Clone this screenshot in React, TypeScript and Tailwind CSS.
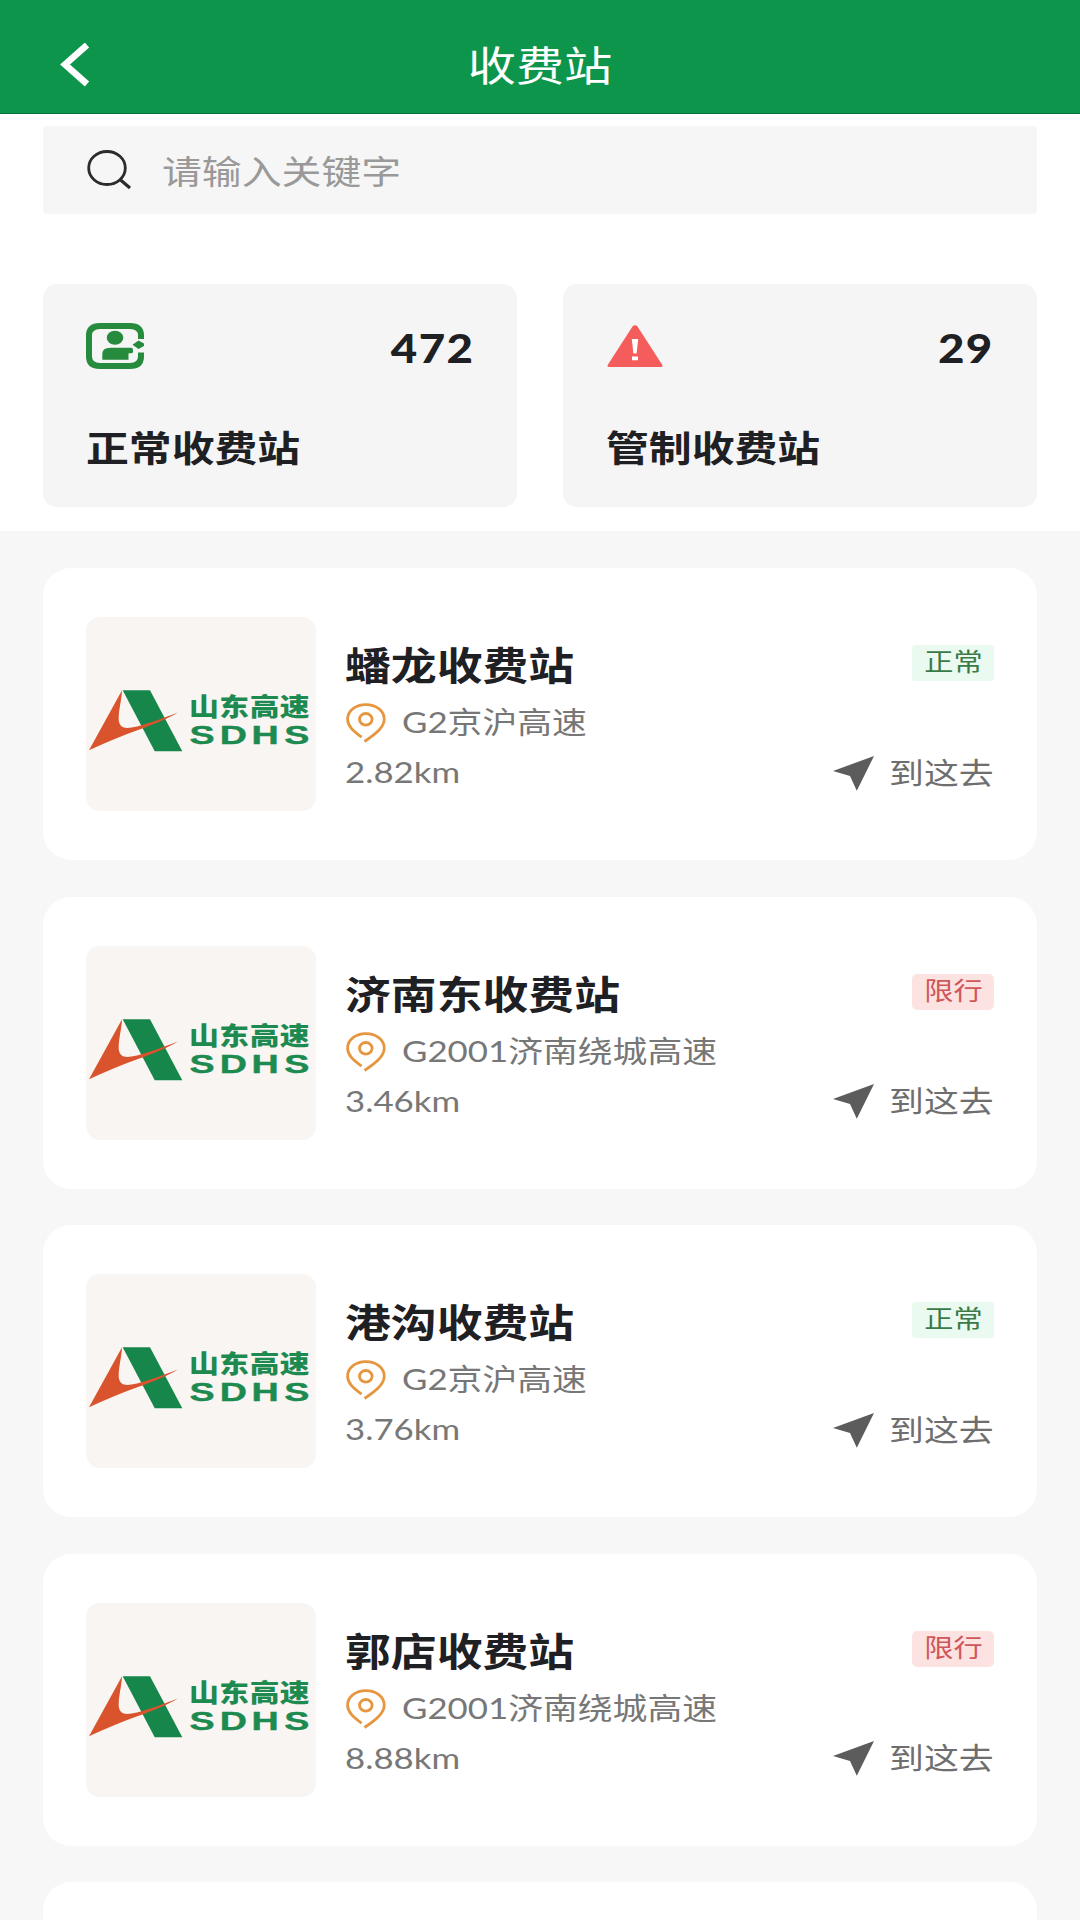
type Station = { name: string; road: string; distance: string; limited: boolean };

const stations: Station[] = [
  { name: '蟠龙收费站', road: 'G2京沪高速', distance: '2.82km', limited: false },
  { name: '济南东收费站', road: 'G2001济南绕城高速', distance: '3.46km', limited: true },
  { name: '港沟收费站', road: 'G2京沪高速', distance: '3.76km', limited: false },
  { name: '郭店收费站', road: 'G2001济南绕城高速', distance: '8.88km', limited: true },
];

function BackIcon() {
  return (
    <svg width="30" height="44" viewBox="0 0 30 44" fill="none" stroke="#fff" strokeWidth="6.5">
      <path d="M27 2 5 21.500l22 19.500" />
    </svg>
  );
}

function SearchIcon() {
  return (
    <svg width="46" height="40" viewBox="0 0 46 40" fill="none" stroke="#2b2b2b" strokeWidth="2.8">
      <ellipse cx="21" cy="18" rx="18.3" ry="16.5" />
      <path d="M34 29.500l10 8.500" strokeWidth="3.2" />
    </svg>
  );
}

function BoothIcon() {
  return (
    <svg width="58" height="46" viewBox="0 0 58 46" fill="#278b3d">
      <path
        d="M55 16v-3.500q0-9.500-11-9.500H14Q3 3 3 12.500v21Q3 43 14 43h30q11 0 11-9.500V29.500"
        fill="none"
        stroke="#278b3d"
        strokeWidth="6"
      />
      <ellipse cx="29" cy="14.800" rx="8.300" ry="7" />
      <path d="M16.300 36.700V31q0-6.300 8-6.300H45q2 0 2 2v2q0 1.500-2 1.500h-2.500v6.500z" />
      <path d="M46.500 21.700l6-4.200 5.500 3v2.500l-5.500 3z" />
    </svg>
  );
}

function WarningIcon() {
  return (
    <svg width="56" height="42" viewBox="0 0 56 42" className="ml-px">
      <path d="M25.500 1.500q2.500-2.500 5 0L55.300 40q.7 2-1.300 2H2q-2 0-1.300-2z" fill="#f55d5d" />
      <path d="M24.800 14h6.400l-1.600 14.500h-3.200zM25 31.500h6v3.800h-6z" fill="#fff" />
    </svg>
  );
}

function PinIcon() {
  return (
    <svg width="40" height="40" viewBox="0 0 40 40" fill="none" stroke="#e6963f" strokeWidth="2.800" className="mt-[2px]">
      <path d="M15.600 34.200C7 28 1.600 23 1.600 16.300 1.600 7.500 10 1.600 19.900 1.600s18.300 5.900 18.300 14.700C38.200 24 30.500 30.500 18.500 38.500" />
      <ellipse cx="19.800" cy="16.300" rx="6.300" ry="5.800" />
    </svg>
  );
}

function NavIcon() {
  return (
    <svg width="41" height="35" viewBox="0 0 41 35" fill="#5c5c5c">
      <path d="M0 15 41 0 23.800 34.800 17 20z" />
    </svg>
  );
}

function Logo() {
  return (
    <svg width="230" height="194" viewBox="0 0 230 194">
      <path d="M36.700 73.300H64l32.300 61H68.700z" fill="#16864b" />
      <path
        d="M3 133.300 36 73.300C35.500 84 32.500 93 32.700 103c.8 7 5 8.800 13 7.500C60 108 74 102 92 95.500 82 101.500 70 106.500 52 113 36 119 19 125.500 3 133.300z"
        fill="#d9532c"
      />
      <g fill="#1d8a50">
        <text
          transform="translate(103 99) scale(1.190 1)"
          x="0 25.500 51 76.300"
          fontSize="25"
          fontWeight="900"
          fontFamily="'Noto Sans CJK SC', sans-serif"
        >
          山东高速
        </text>
        <text
          transform="translate(103.500 127) scale(1.450 1)"
          x="0 20.900 42.700 65.400"
          fontSize="26"
          fontWeight="700"
          stroke="#1d8a50"
          strokeWidth="0.400"
          fontFamily="'Liberation Sans', sans-serif"
        >
          SDHS
        </text>
      </g>
    </svg>
  );
}

function StatCard({ icon, count, label }: { icon: React.ReactNode; count: string; label: string }) {
  return (
    <div className="flex h-[223px] w-[474px] flex-col rounded-[14px] bg-[#f5f5f5] px-[43px] pt-[38px]">
      <div className="flex h-[48px] items-center justify-between">
        {icon}
        <span className="origin-right scale-x-[1.170] pt-1 text-[39px] leading-[48px] font-black tracking-[1.2px]">
          {count}
        </span>
      </div>
      <span className="mt-[51px] origin-left scale-x-[1.190] self-start text-[36px] leading-[54px] font-bold whitespace-nowrap">
        {label}
      </span>
    </div>
  );
}

function StationCard({ station }: { station: Station }) {
  return (
    <div className="flex h-[292px] shrink-0 rounded-[28px] bg-white px-[43px]">
      <div className="mt-[49px] h-[194px] w-[230px] shrink-0 rounded-[14px] bg-[#f9f5f2]">
        <Logo />
      </div>
      <div className="ml-[29px] flex flex-1 flex-col items-start pt-[70px]">
        <h2 className="origin-left scale-x-[1.175] text-[39px] leading-[54px] font-bold whitespace-nowrap">
          {station.name}
        </h2>
        <div className="mt-[8px] flex h-[44px] items-center gap-[16px] pl-px">
          <PinIcon />
          <span className="origin-left scale-x-[1.180] text-[29.5px] leading-[44px] whitespace-nowrap text-[#777]">
            {station.road}
          </span>
        </div>
        <span className="mt-[6px] origin-left scale-x-[1.180] text-[29.5px] leading-[44px] text-[#777]">
          {station.distance}
        </span>
      </div>
      <div className="flex flex-col items-end pt-[77px]">
        <div
          className={
            station.limited
              ? 'flex h-[36px] w-[82px] items-center justify-center rounded-[5px] bg-[#fde2e2] text-[#cf5659]'
              : 'flex h-[36px] w-[82px] items-center justify-center rounded-[3px] bg-[#ebfaf0] text-[#3a7a48]'
          }
        >
          <span className="-mt-[2px] scale-x-[1.190] text-[24.5px] leading-[34px] whitespace-nowrap">
            {station.limited ? '限行' : '正常'}
          </span>
        </div>
        <div className="mt-[70px] flex h-[44px] items-center text-[#6e6e6e]">
          <NavIcon />
          <span className="-mt-px ml-[31px] origin-right scale-x-[1.180] text-[29.5px] leading-[44px] whitespace-nowrap">
            到这去
          </span>
        </div>
      </div>
    </div>
  );
}

export default function App() {
  return (
    <div className="flex h-[1920px] w-[1080px] flex-col overflow-hidden bg-[#f7f7f7] font-[Lato,'Noto_Sans_CJK_SC',sans-serif] text-[#1f2023]">
      <header className="grid h-[114px] shrink-0 grid-cols-3 items-center border-b border-[#0b7039] bg-[#0d964b] px-[60px] pt-[16px]">
        <BackIcon />
        <h1 className="scale-x-[1.190] pt-[3px] text-center text-[40.5px] leading-[60px] text-white">收费站</h1>
      </header>
      <section className="h-[417px] shrink-0 bg-white px-[43px] pt-[12px]">
        <div className="flex h-[88px] items-center rounded-[4px] bg-[#f6f6f6] pl-[43px]">
          <SearchIcon />
          <span className="ml-[30px] origin-left scale-x-[1.190] pt-[2px] text-[33.5px] leading-[50px] text-[#999]">
            请输入关键字
          </span>
        </div>
        <div className="mt-[70px] flex justify-between">
          <StatCard icon={<BoothIcon />} count="472" label="正常收费站" />
          <StatCard icon={<WarningIcon />} count="29" label="管制收费站" />
        </div>
      </section>
      <main className="flex flex-col gap-[36.5px] px-[43px] pt-[37px]">
        {stations.map((s) => (
          <StationCard key={s.name} station={s} />
        ))}
        <div className="h-[292px] shrink-0 rounded-[28px] bg-white" />
      </main>
    </div>
  );
}
